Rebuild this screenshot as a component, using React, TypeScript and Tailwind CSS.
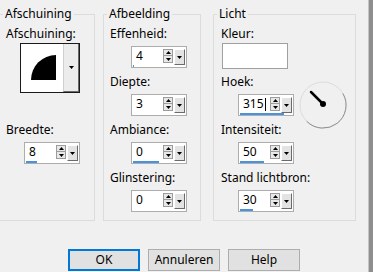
import React from "react";

function Tri({ dir }: { dir: "up" | "down" }) {
  return (
    <svg width="5" height="3" viewBox="0 0 5 3" className="block">
      {dir === "up" ? <path d="M0 3 L2.5 0 L5 3 Z" fill="#000" /> : <path d="M0 0 L5 0 L2.5 3 Z" fill="#000" />}
    </svg>
  );
}

function DropBtn({ h = 16, w = 11 }: { h?: number; w?: number }) {
  return (
    <div
      className="flex items-center justify-center bg-[#e3e3e3] border-t border-l border-t-white border-l-white border-r border-b border-r-[#6a6a6a] border-b-[#6a6a6a]"
      style={{ width: w, height: h }}
    >
      <Tri dir="down" />
    </div>
  );
}

function Spinner({ value, bar, cursor }: { value: string; bar: number; cursor?: boolean }) {
  return (
    <div className="w-[56px] h-[22px] border border-[#adadad] bg-white flex">
      <div className="w-[30px] flex flex-col pl-[1px]">
        <div className="h-[18px] pl-[3px] text-[12px] leading-[18px] text-black flex items-center">
          <span>{value}</span>
          {cursor && <span className="inline-block w-[1px] h-[13px] bg-black ml-[1px]" />}
        </div>
        <div className="h-[2px] bg-[#4a92dc]" style={{ width: bar }} />
      </div>
      <div className="ml-[1px] mt-[2px] w-[10px] h-[14px] border border-[#9c9c9c] bg-[#e8e8e8] flex flex-col">
        <div className="h-[6px] flex items-center justify-center border-b border-[#9c9c9c]">
          <Tri dir="up" />
        </div>
        <div className="flex-1 flex items-center justify-center">
          <Tri dir="down" />
        </div>
      </div>
      <div className="ml-[1px] mt-[2px]">
        <DropBtn />
      </div>
    </div>
  );
}

function Label({ children, mt }: { children: React.ReactNode; mt: string }) {
  return <div className={`${mt} h-[16px] text-[12px] leading-[16px] text-black whitespace-nowrap`}>{children}</div>;
}

function Legend({ children }: { children: React.ReactNode }) {
  return <legend className="ml-[3px] px-[2px] text-[12px] leading-[16px] text-black">{children}</legend>;
}

export default function App() {
  return (
    <div className="w-[373px] h-[272px] bg-[#f0f0f0] flex overflow-hidden font-['Noto_Sans',sans-serif]">
      <div className="w-[368px] flex flex-col">
        <div className="flex pt-[6px]">
          {/* Afschuining */}
          <fieldset className="ml-[-1px] w-[96px] h-[215px] border border-[#dcdcdc]">
            <Legend>Afschuining</Legend>
            <div className="pl-[6px] flex flex-col items-start">
              <Label mt="mt-[4px]">Afschuining:</Label>
              <div className="mt-[1px] ml-[14px] w-[60px] h-[50px] border border-[#1a1a1a] bg-white flex">
                <div className="flex-1 pl-[10px] pt-[11px]">
                  <svg width="25" height="25" viewBox="0 0 25 25" className="block">
                    <path d="M0 25 A25 25 0 0 1 25 0 L25 25 Z" fill="#000" />
                  </svg>
                </div>
                <div className="w-[16px] h-full flex items-center justify-center bg-[#ececec] border-l border-l-[#d0d0d0] border-r border-b border-r-[#6a6a6a] border-b-[#6a6a6a]">
                  <Tri dir="down" />
                </div>
              </div>
              <Label mt="mt-[29px]">Breedte:</Label>
              <div className="mt-[4px] ml-[18px]">
                <Spinner value="8" bar={11} />
              </div>
            </div>
          </fieldset>

          {/* Afbeelding */}
          <fieldset className="ml-[8px] w-[98px] h-[215px] border border-[#dcdcdc]">
            <Legend>Afbeelding</Legend>
            <div className="pl-[6px] flex flex-col items-start">
              <Label mt="mt-[4px]">Effenheid:</Label>
              <div className="mt-[4px] ml-[21px]">
                <Spinner value="4" bar={1} />
              </div>
              <Label mt="mt-[6px]">Diepte:</Label>
              <div className="mt-[4px] ml-[21px]">
                <Spinner value="3" bar={0} />
              </div>
              <Label mt="mt-[6px]">Ambiance:</Label>
              <div className="mt-[4px] ml-[21px]">
                <Spinner value="0" bar={26} />
              </div>
              <Label mt="mt-[6px]">Glinstering:</Label>
              <div className="mt-[4px] ml-[21px]">
                <Spinner value="0" bar={0} />
              </div>
            </div>
          </fieldset>

          {/* Licht */}
          <fieldset className="ml-[12px] w-[143px] h-[215px] border border-[#dcdcdc]">
            <Legend>Licht</Legend>
            <div className="pl-[7px] flex flex-col items-start">
              <Label mt="mt-[4px]">Kleur:</Label>
              <div className="mt-[1px] ml-[1px] w-[66px] h-[26px] bg-white border border-[#a0a0a0]" />
              <div className="mt-[5px] h-[42px] flex items-start">
                <div className="flex flex-col items-start">
                  <Label mt="mt-0">Hoek:</Label>
                  <div className="mt-[4px] ml-[17px]">
                    <Spinner value="315" bar={44} cursor />
                  </div>
                </div>
                <div className="ml-[5px] mt-[7px] w-[48px] h-[48px] shrink-0">
                  <svg width="48" height="48" viewBox="0 0 48 48" className="block">
                    <circle cx="24" cy="24" r="23" fill="none" stroke="#dcdcdc" strokeWidth="1" />
                    <path d="M43.9 12.5 A23 23 0 0 1 7.7 40.3" fill="none" stroke="#8e8e8e" strokeWidth="1" />
                    <line x1="12" y1="11" x2="24" y2="23" stroke="#000" strokeWidth="2.5" strokeLinecap="round" />
                    <circle cx="24" cy="23" r="3" fill="#000" />
                  </svg>
                </div>
              </div>
              <Label mt="mt-[6px]">Intensiteit:</Label>
              <div className="mt-[4px] ml-[17px]">
                <Spinner value="50" bar={24} />
              </div>
              <Label mt="mt-[6px]">Stand lichtbron:</Label>
              <div className="mt-[4px] ml-[17px]">
                <Spinner value="30" bar={13} />
              </div>
            </div>
          </fieldset>
        </div>

        <div className="mt-[28px] pl-[68px] flex gap-[8px]">
          <button className="w-[72px] h-[22px] bg-[#e1e1e1] border-2 border-[#0078d7] text-[12px] leading-[16px] text-black">
            OK
          </button>
          <button className="w-[72px] h-[22px] bg-[#e1e1e1] border border-[#adadad] text-[12px] leading-[16px] text-black">
            Annuleren
          </button>
          <button className="w-[72px] h-[22px] bg-[#e1e1e1] border border-[#adadad] text-[12px] leading-[16px] text-black">
            Help
          </button>
        </div>
      </div>
      <div className="w-[5px] h-full bg-[#8e8e8e] border-l border-l-[#c4c4c4]" />
    </div>
  );
}
